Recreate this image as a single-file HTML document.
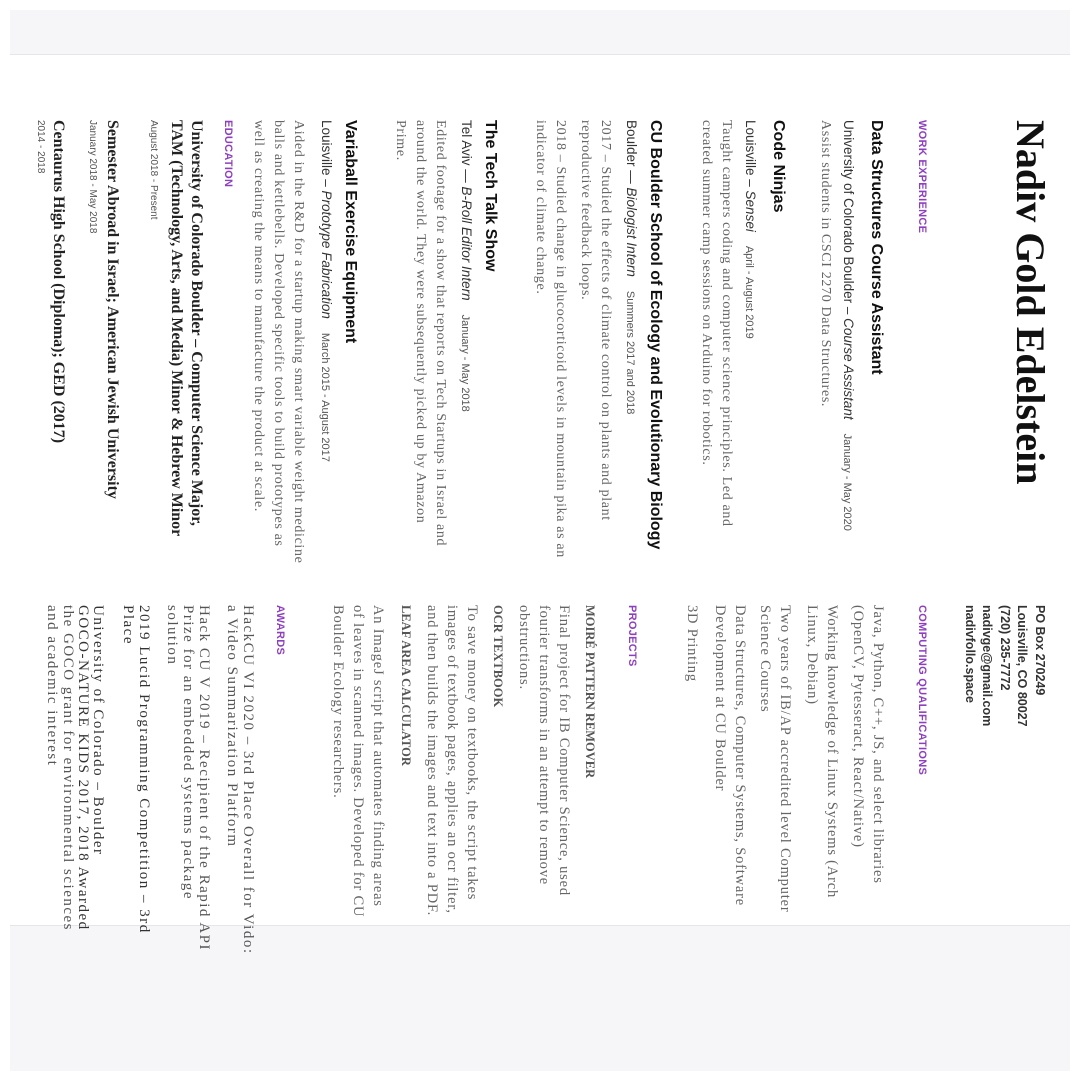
<!DOCTYPE html>
<html><head><meta charset="utf-8"><style>
html,body{margin:0;padding:0;width:1080px;height:1080px;background:#fff;overflow:hidden}
.band{position:absolute;left:10px;width:1060px;background:#f6f6f8}
#r{position:absolute;left:1070px;top:55px;width:870px;height:1060px;transform-origin:0 0;transform:rotate(90deg)}
#r div{position:absolute;white-space:nowrap;line-height:20px}
.n{font:bold 40px/40px "Liberation Serif",serif;color:#111;left:65px;top:30px}
.h{font:bold 11px "Liberation Sans",sans-serif;color:#8e3fbf;letter-spacing:.3px}
.t{font:bold 16px "Liberation Sans",sans-serif;color:#111}
.s{font:13.5px "Liberation Sans",sans-serif;color:#333}
.s i{font-style:italic}
.d{font-size:11px;color:#555;margin-left:14px}
.b{font:14px "Liberation Serif",serif;color:#666;letter-spacing:.65px}
.R.b{font-size:14.5px;letter-spacing:.8px}
.e{font:bold 16px "Liberation Serif",serif;color:#222}
.sm{font:10px "Liberation Sans",sans-serif;color:#555}
.c{font:bold 12.5px "Liberation Sans",sans-serif;color:#333}
.rb{font:bold 12.5px "Liberation Serif",serif;color:#555}
.aw{font:15px "Liberation Serif",serif;color:#555;letter-spacing:1.5px;line-height:16px!important}
.L{left:65px}.R{left:550px}
</style></head><body>
<div class="band" style="top:10px;height:44px;border-bottom:1px solid #e6e6e8"></div>
<div class="band" style="top:925px;height:145px;border-top:1px solid #e6e6e8"></div>
<div id="r">
<div class="n">Nadiv Gold Edelstein</div>
<div class="h L" style="top:138px">WORK EXPERIENCE</div>
<div class="t L" style="top:184px">Data Structures Course Assistant</div>
<div class="s L" style="top:212px">University of Colorado Boulder – <i>Course Assistant</i><span class="d">January - May 2020</span></div>
<div class="b L" style="top:235px">Assist students in CSCI 2270 Data Structures.</div>
<div class="t L" style="top:282px">Code Ninjas</div>
<div class="s L" style="top:310px">Louisville – <i>Sensei</i><span class="d">April - August 2019</span></div>
<div class="b L" style="top:334px">Taught campers coding and computer science principles. Led and</div>
<div class="b L" style="top:354px">created summer camp sessions on Arduino for robotics.</div>
<div class="t L" style="top:405px">CU Boulder School of Ecology and Evolutionary Biology</div>
<div class="s L" style="top:429px">Boulder — <i>Biologist Intern</i><span class="d">Summers 2017 and 2018</span></div>
<div class="b L" style="top:455px">2017 – Studied the effects of climate control on plants and plant</div>
<div class="b L" style="top:475px">reproductive feedback loops.</div>
<div class="b L" style="top:500px">2018 – Studied change in glucocorticoid levels in mountain pika as an</div>
<div class="b L" style="top:520px">indicator of climate change.</div>
<div class="t L" style="top:570px">The Tech Talk Show</div>
<div class="s L" style="top:594px">Tel Aviv — <i>B-Roll Editor Intern</i><span class="d">January - May 2018</span></div>
<div class="b L" style="top:620px">Edited footage for a show that reports on Tech Startups in Israel and</div>
<div class="b L" style="top:640px">around the world. They were subsequently picked up by Amazon</div>
<div class="b L" style="top:660px">Prime.</div>
<div class="t L" style="top:710px">Variaball Exercise Equipment</div>
<div class="s L" style="top:734px">Louisville – <i>Prototype Fabrication</i><span class="d">March 2015 - August 2017</span></div>
<div class="b L" style="top:762px">Aided in the R&amp;D for a startup making smart variable weight medicine</div>
<div class="b L" style="top:782px">balls and kettlebells. Developed specific tools to build prototypes as</div>
<div class="b L" style="top:802px">well as creating the means to manufacture the product at scale.</div>
<div class="h L" style="top:832px">EDUCATION</div>
<div class="e L" style="top:864px">University of Colorado Boulder – Computer Science Major,</div>
<div class="e L" style="top:884px">TAM (Technology, Arts, and Media) Minor &amp; Hebrew Minor</div>
<div class="sm L" style="top:907px">August 2018 - Present</div>
<div class="e L" style="top:948px">Semester Abroad in Israel; American Jewish University</div>
<div class="sm L" style="top:968px">January 2018 - May 2018</div>
<div class="e L" style="top:1002px">Centaurus High School (Diploma); GED (2017)</div>
<div class="sm L" style="top:1020px">2014 - 2018</div>

<div class="c R" style="top:20px">PO Box 270249</div>
<div class="c R" style="top:38px">Louisville, CO 80027</div>
<div class="c R" style="top:55px">(720) 235-7772</div>
<div class="c R" style="top:73px">nadivge@gmail.com</div>
<div class="c R" style="top:90px">nadivfollo.space</div>
<div class="h R" style="top:138px">COMPUTING QUALIFICATIONS</div>
<div class="b R" style="top:182px">Java, Python, C++, JS, and select libraries</div>
<div class="b R" style="top:202px">(OpenCV, Pytesseract, React/Native)</div>
<div class="b R" style="top:228px">Working knowledge of Linux Systems (Arch</div>
<div class="b R" style="top:248px">Linux, Debian)</div>
<div class="b R" style="top:275px">Two years of IB/AP accredited level Computer</div>
<div class="b R" style="top:295px">Science Courses</div>
<div class="b R" style="top:320px">Data Structures, Computer Systems, Software</div>
<div class="b R" style="top:340px">Development at CU Boulder</div>
<div class="b R" style="top:368px">3D Printing</div>
<div class="h R" style="top:428px">PROJECTS</div>
<div class="rb R" style="top:470px">MOIRÉ PATTERN REMOVER</div>
<div class="b R" style="top:496px">Final project for IB Computer Science, used</div>
<div class="b R" style="top:516px">fourier transforms in an attempt to remove</div>
<div class="b R" style="top:536px">obstructions.</div>
<div class="rb R" style="top:562px">OCR TEXTBOOK</div>
<div class="b R" style="top:588px">To save money on textbooks, the script takes</div>
<div class="b R" style="top:608px">images of textbook pages, applies an ocr filter,</div>
<div class="b R" style="top:628px">and then builds the images and text into a PDF.</div>
<div class="rb R" style="top:654px">LEAF AREA CALCULATOR</div>
<div class="b R" style="top:682px">An ImageJ script that automates finding areas</div>
<div class="b R" style="top:702px">of leaves in scanned images. Developed for CU</div>
<div class="b R" style="top:722px">Boulder Ecology researchers.</div>
<div class="h R" style="top:780px">AWARDS</div>
<div class="aw R" style="top:814px">HackCU VI 2020 – 3rd Place Overall for Vido:</div>
<div class="aw R" style="top:830px">a Video Summarization Platform</div>
<div class="aw R" style="top:858px">Hack CU V 2019 – Recipient of the Rapid API</div>
<div class="aw R" style="top:874px">Prize for an embedded systems package</div>
<div class="aw R" style="top:890px">solution</div>
<div class="aw R" style="top:918px;color:#333">2019 Lucid Programming Competition – 3rd</div>
<div class="aw R" style="top:934px;color:#333">Place</div>
<div class="aw R" style="top:964px;color:#333">University of Colorado – Boulder</div>
<div class="aw R" style="top:979px;color:#333">GOCO-NATURE KIDS 2017, 2018 Awarded</div>
<div class="aw R" style="top:994px">the GOCO grant for environmental sciences</div>
<div class="aw R" style="top:1010px">and academic interest</div>
</div>
</body></html>
